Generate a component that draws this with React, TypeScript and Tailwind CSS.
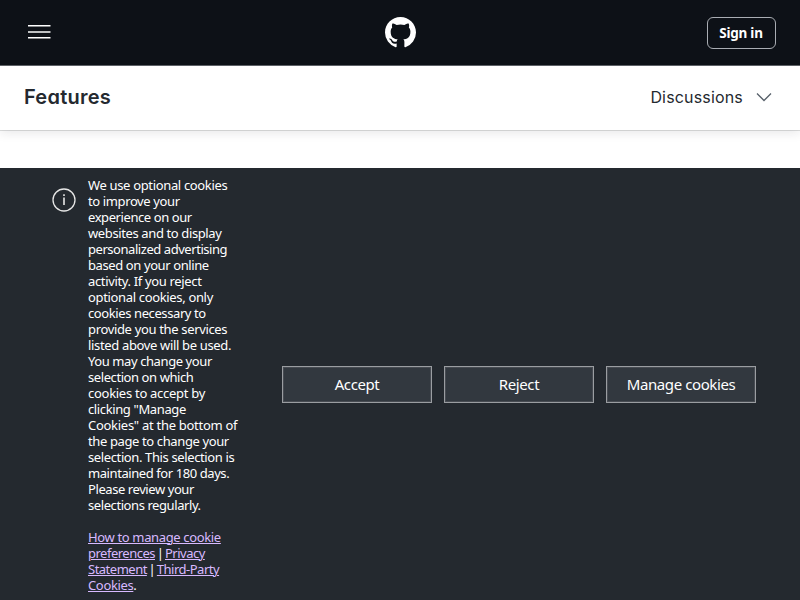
import React from 'react';

const notice: [string, string][] = [
  ['We use optional cookies', 'tracking-[-0.34px]'],
  ['to improve your', 'tracking-[-0.38px]'],
  ['experience on our', 'tracking-[-0.42px]'],
  ['websites and to display', 'tracking-[-0.38px]'],
  ['personalized advertising', 'tracking-[-0.45px]'],
  ['based on your online', 'tracking-[-0.4px]'],
  ['activity. If you reject', 'tracking-[-0.34px]'],
  ['optional cookies, only', 'tracking-[-0.34px]'],
  ['cookies necessary to', 'tracking-[-0.4px]'],
  ['provide you the services', 'tracking-[-0.34px]'],
  ['listed above will be used.', 'tracking-[-0.34px]'],
  ['You may change your', 'tracking-[-0.41px]'],
  ['selection on which', 'tracking-[-0.42px]'],
  ['cookies to accept by', 'tracking-[-0.28px]'],
  ['clicking "Manage', 'tracking-[-0.38px]'],
  ['Cookies" at the bottom of', 'tracking-[-0.28px]'],
  ['the page to change your', 'tracking-[-0.38px]'],
  ['selection. This selection is', 'tracking-[-0.38px]'],
  ['maintained for 180 days.', 'tracking-[-0.42px]'],
  ['Please review your', 'tracking-[-0.42px]'],
  ['selections regularly.', 'tracking-[-0.42px]'],
];

function Link({ children }: { children: React.ReactNode }) {
  return <a className="text-[#d8b9ff] underline decoration-1 underline-offset-1">{children}</a>;
}

function Divider() {
  return <span className="mr-[-1.3px] ml-[-1.2px]"> | </span>;
}

function CookieButton({ label }: { label: string }) {
  return (
    <button className="h-[37px] w-[150px] border border-[#9a9da1] bg-[#32383f] pb-px text-[15px] tracking-[-0.4px] text-white shadow-[inset_0_0_0_1px_rgba(154,157,161,0.2)]">
      {label}
    </button>
  );
}

export default function App() {
  return (
    <div className="flex h-[600px] w-[800px] flex-col overflow-hidden bg-white font-['Noto_Sans',sans-serif]">
      <header className="flex h-[66px] shrink-0 items-center justify-between border-b border-[#5f6368] bg-[#0d1117] px-6">
        <div className="flex w-[69px] pb-px pl-1">
          <svg width="23" height="14" viewBox="0 0 23 14">
            <rect y="0" width="22.5" height="1.5" fill="#fff" />
            <rect y="6" width="22.5" height="2" fill="#bfc1c2" />
            <rect y="12" width="22.5" height="1.5" fill="#fff" />
          </svg>
        </div>
        <svg width="31" height="31" viewBox="0 0 16 16" fill="#fff" className="mb-px">
          <path d="M8 0c4.42 0 8 3.58 8 8a8.013 8.013 0 0 1-5.45 7.59c-.4.08-.55-.17-.55-.38 0-.27.01-1.13.01-2.2 0-.75-.25-1.23-.54-1.48 1.78-.2 3.65-.88 3.65-3.95 0-.88-.31-1.59-.82-2.15.08-.2.36-1.02-.08-2.12 0 0-.67-.22-2.2.82-.64-.18-1.32-.27-2-.27-.68 0-1.36.09-2 .27-1.53-1.03-2.2-.82-2.2-.82-.44 1.1-.16 1.92-.08 2.12-.51.56-.82 1.28-.82 2.15 0 3.06 1.86 3.75 3.64 3.95-.23.2-.44.55-.51 1.07-.46.21-1.61.55-2.33-.66-.15-.24-.6-.83-1.23-.82-.67.01-.27.38.01.53.34.19.73.9.82 1.13.16.45.68 1.31 2.69.94 0 .67.01 1.3.01 1.49 0 .21-.15.45-.55.38A7.995 7.995 0 0 1 0 8c0-4.42 3.58-8 8-8Z" />
        </svg>
        <button className="h-8 w-[69px] rounded-md border border-[#a9adb3] pt-0.5 pr-px text-[13.5px] font-bold tracking-[-0.25px] text-white">
          Sign in
        </button>
      </header>
      <nav className="flex h-16 shrink-0 items-center justify-between px-6 pb-[3px] font-['Inter',sans-serif] text-[#24292f] shadow-[0_1px_0_rgba(27,31,36,0.15),0_3px_10px_rgba(27,31,36,0.1)]">
        <span className="text-xl font-semibold tracking-[0.25px] [font-feature-settings:'cv11']">Features</span>
        <div className="flex items-center text-base">
          <span className="tracking-[0.17px]">Discussions</span>
          <svg width="16" height="10" viewBox="0 0 16 10" className="mt-px mr-1 ml-[13px]" fill="none" stroke="#57606a" strokeWidth="1.3">
            <path d="M1 1.5 8 8.5 15 1.5" />
          </svg>
        </div>
      </nav>
      <section className="mt-[38px] flex flex-1 bg-[#24292f] pl-[52px]">
        <svg width="24" height="24" viewBox="0 0 24 24" className="mt-5 shrink-0" fill="none" stroke="#e6e6e6" strokeWidth="1.3">
          <circle cx="12" cy="12" r="11" />
          <path d="M12 9.5v7.5M12 6.3v1.6" strokeWidth="1.6" />
        </svg>
        <div className="ml-3 w-[194px] shrink-0 pt-[9px] text-[13px] leading-4 whitespace-nowrap text-white">
          {notice.map(([line, tracking]) => (
            <div key={line} className={tracking}>{line}</div>
          ))}
          <div className="mt-4 tracking-[-0.35px]"><Link>How to manage cookie</Link></div>
          <div className="tracking-[-0.5px]"><Link>preferences</Link><Divider /><Link>Privacy</Link></div>
          <div className="tracking-[-0.5px]"><Link>Statement</Link><Divider /><Link>Third-Party</Link></div>
          <div className="tracking-[-0.35px]"><Link>Cookies</Link>.</div>
        </div>
        <div className="flex gap-3 pt-[198px]">
          <CookieButton label="Accept" />
          <CookieButton label="Reject" />
          <CookieButton label="Manage cookies" />
        </div>
      </section>
    </div>
  );
}
